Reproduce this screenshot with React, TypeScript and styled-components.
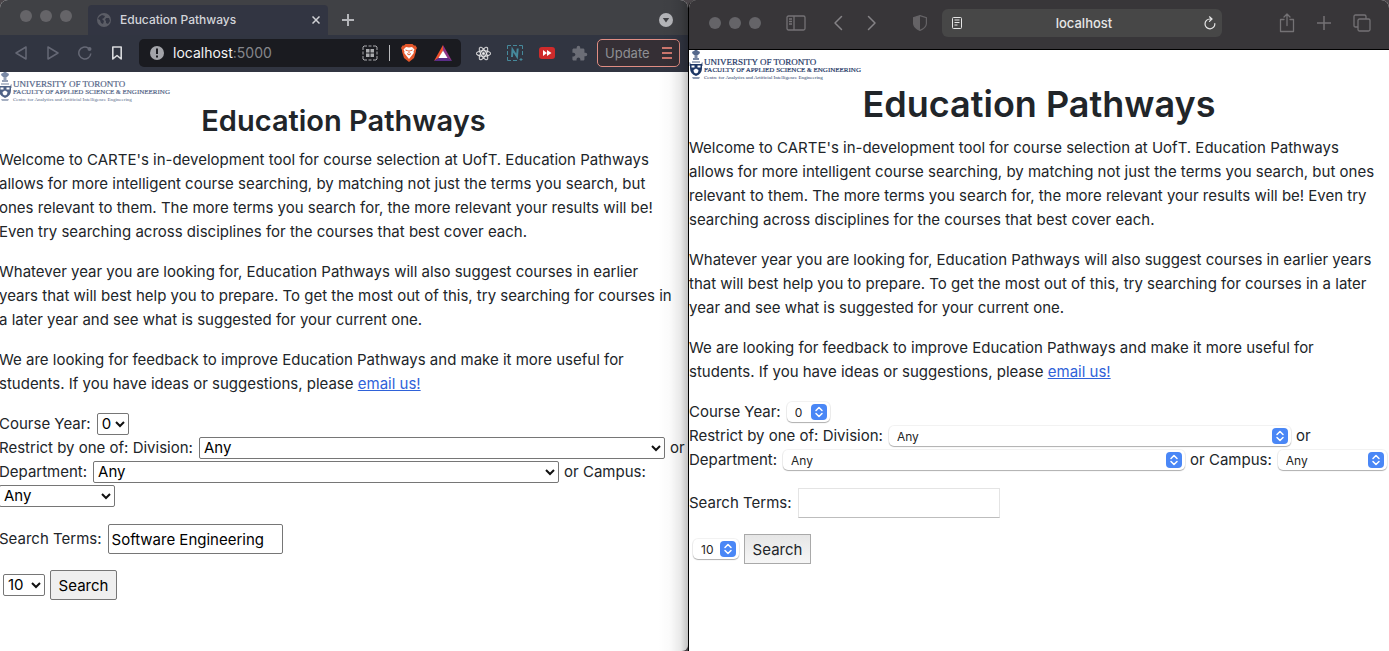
import React, { useId } from "react";
import styled, { createGlobalStyle, css } from "styled-components";
import { FaReact } from "react-icons/fa";
import { MdExtension } from "react-icons/md";

type Look = "brave" | "safari";

const GlobalStyle = createGlobalStyle`
  *, *::before, *::after { box-sizing: border-box; }
  body {
    margin: 0;
    background: #4a4549;
    color: #212529;
    font-family: Inter, Roboto, "Liberation Sans", sans-serif;
    font-size: 15px;
    line-height: 24px;
  }
  button, input, select { font-family: inherit; margin: 0; }
  svg { display: block; flex: none; }
`;

const Desktop = styled.div`
  display: grid;
  grid-template-columns: 688fr 701fr;
  min-height: 100vh;
`;

const Window = styled.section<{ $look: Look }>`
  display: flex;
  flex-direction: column;
  min-width: 0;
  overflow: hidden;
  background: #fff;
  ${({ $look }) =>
    $look === "brave"
      ? css`
          position: relative;
          border-radius: 8px 8px 6px 0;
          &::after {
            content: "";
            position: absolute;
            inset: 0 0 0 auto;
            width: 30px;
            pointer-events: none;
            background: linear-gradient(
              to right,
              rgba(0, 0, 0, 0),
              rgba(0, 0, 0, 0.02) 40%,
              rgba(0, 0, 0, 0.09) 76%,
              rgba(0, 0, 0, 0.24)
            );
          }
        `
      : css`
          border-left: 1px solid #000;
          border-radius: 8px 8px 0 0;
        `}
`;

/* Window chrome */

const TabStrip = styled.header`
  display: flex;
  align-items: flex-end;
  height: 35px;
  padding: 0 14px 0 20px;
  background: #404145;
`;

const Lights = styled.div<{ $lift?: boolean }>`
  display: flex;
  gap: 8px;
  align-self: flex-start;
  padding-top: ${({ $lift }) => ($lift ? "10px" : "17px")};
`;

const Light = styled.span`
  width: 12px;
  height: 12px;
  border-radius: 50%;
  background: #656468;
`;

const Tab = styled.div`
  display: flex;
  align-items: center;
  width: 240px;
  height: 30px;
  margin-left: 16px;
  padding: 0 4px 0 9px;
  border-radius: 4px 4px 0 0;
  background: #323542;
`;

const TabTitle = styled.span`
  flex: 1;
  margin-left: 9px;
  color: #d3d4d9;
  font-size: 12px;
  font-weight: 500;
`;

const IconButton = styled.button<{ $width?: number }>`
  display: flex;
  align-items: center;
  justify-content: center;
  flex: none;
  width: ${({ $width = 32 }) => $width}px;
  height: 28px;
  padding: 0;
  border: 0;
  background: none;
  color: inherit;
`;

const TabStripEnd = styled.div`
  display: flex;
  flex: 1;
  align-items: center;
  justify-content: space-between;
  height: 30px;
  padding-left: 12px;
  color: #b4b5b9;
`;

const Toolbar = styled.div`
  display: flex;
  align-items: center;
  height: 37px;
  padding: 0 8px 1px 5px;
  background: #313541;
  color: #656875;
`;

const AddressBar = styled.div`
  display: flex;
  flex: 1;
  align-items: center;
  height: 28px;
  margin: 0 6px;
  padding: 0 9px 0 11px;
  border-radius: 5px;
  background: #1a1b20;
`;

const AddressText = styled.span`
  flex: 1;
  margin-left: 9px;
  color: #85868b;
  font-size: 14px;

  b {
    color: #f4f4f5;
    font-weight: 400;
  }
`;

const AddressIcons = styled.div`
  display: flex;
  align-items: center;
  gap: 11px;
`;

const Divider = styled.span`
  width: 1px;
  height: 16px;
  background: #b9babd;
`;

const UpdateButton = styled.button`
  display: flex;
  align-items: center;
  justify-content: space-between;
  width: 83px;
  height: 28px;
  margin-left: 2px;
  padding: 0 7px;
  border: 1px solid #e08d83;
  border-radius: 5px;
  background: #352f35;
  color: #8f8f94;
  font-size: 13px;
`;

const SafariBar = styled.header`
  display: flex;
  align-items: center;
  height: 50px;
  padding-bottom: 3px;
  border-bottom: 1px solid #000;
  background: #383639;
  color: #747275;
`;

const SafariStart = styled.div`
  display: flex;
  width: 253px;
  padding-left: 20px;
`;

const SafariLights = styled(Lights)`
  align-self: center;
  padding: 0 15px 0 0;
`;

const SafariTool = styled(IconButton)`
  &:nth-child(3) { margin-left: 5px; }
  &:nth-child(5) { margin-left: 14px; }
`;

const SafariAddress = styled.div`
  display: flex;
  flex: 1;
  align-items: center;
  justify-content: space-between;
  height: 28px;
  padding: 0 6px 0 8px;
  border-radius: 6px;
  background: #474747;
  color: #e6e6e6;
  font-size: 13px;
  font-weight: 500;
`;

const SafariEnd = styled.div`
  display: flex;
  justify-content: flex-end;
  width: 167px;
  padding-right: 8px;
`;

/* Page content */

const Page = styled.main<{ $look: Look }>`
  margin-left: ${({ $look }) => ($look === "brave" ? "-1px" : "0")};
  white-space: nowrap;
`;

const Title = styled.h1<{ $look: Look }>`
  margin: 0 0 8px;
  font-weight: 600;
  text-align: center;
  ${({ $look }) =>
    $look === "brave"
      ? css`
          font-size: 29px;
          line-height: 38px;
        `
      : css`
          font-size: 36px;
          line-height: 48px;
        `}
`;

const Paragraph = styled.p`
  margin: 0 0 16px;
`;

const Link = styled.a`
  color: #2f62d9;
  text-decoration: underline;
`;

const Filters = styled.div`
  margin-bottom: 16px;
`;

const Line = styled.div`
  display: flex;
  align-items: center;
  gap: 5px;
  height: 24px;
`;

const FieldLine = styled(Line)`
  height: 30px;
  margin-bottom: 16px;
`;

const SubmitLine = styled(FieldLine)`
  padding-left: 4px;
`;

const Label = styled.label`
  margin-right: 1px;
`;

const Picker = styled.span<{ $look: Look; $width: number }>`
  display: inline-grid;
  align-items: center;
  width: ${({ $width }) => $width}px;

  > * { grid-area: 1 / 1; }
  > svg {
    justify-self: end;
    margin-right: ${({ $look }) => ($look === "brave" ? "4px" : "3px")};
    pointer-events: none;
  }
`;

const Select = styled.select<{ $look: Look }>`
  appearance: none;
  width: 100%;
  background: #fff;
  ${({ $look }) =>
    $look === "brave"
      ? css`
          height: 22px;
          padding: 0 4px;
          border: 1px solid #767676;
          border-radius: 2px;
          color: #000;
          font-size: 15px;
          line-height: 20px;
        `
      : css`
          height: 20px;
          padding: 1px 8px 0;
          border: 0;
          border-radius: 5px;
          box-shadow: 0 0 0 1px rgba(0, 0, 0, 0.05), 0 1px 1px rgba(0, 0, 0, 0.28);
          color: #252525;
          font-size: 12px;
          line-height: 19px;
        `}
`;

const TextInput = styled.input<{ $look: Look }>`
  height: 30px;
  padding: 0 3px;
  background: #fff;
  color: #000;
  font-size: 15px;
  ${({ $look }) =>
    $look === "brave"
      ? css`
          width: 175px;
          border: 1px solid #767676;
          border-radius: 2px;
        `
      : css`
          width: 202px;
          border: 1px solid #e4e4e4;
          border-bottom-color: #bdbdbd;
        `}
`;

const SearchButton = styled.button<{ $look: Look }>`
  width: 67px;
  height: 30px;
  padding: 0;
  font-size: 15px;
  ${({ $look }) =>
    $look === "brave"
      ? css`
          border: 1px solid #767676;
          border-radius: 2px;
          background: #efefef;
          color: #000;
        `
      : css`
          border: 1px solid #a9a9a9;
          background: linear-gradient(#e6e6e6, #f6f6f6);
          color: #212529;
        `}
`;

const CrestLogo = ({ faded }: { faded?: boolean }) => (
  <svg width="178" height="30" viewBox={faded ? "1 0 178 30" : "0 0 178 30"} role="img" opacity={faded ? 0.78 : 1}>
    <g fill="#1e3765">
      <path d="M3 3q0-2 2-2l1-1h2l1 1q2 0 2 2l-2 2H5Z" opacity=".75" />
      <path d="M5.500 5h3v4h-3zM4 8h6v2H4z" opacity=".6" />
      <path d="M3 11h8v2H3z" opacity=".4" />
      <path d="M1 14h12v4q0 6-6 8-6-2-6-8Z" />
      <path d="M3 27h8l-1 2H4Z" opacity=".5" />
      <path d="M0 12l2 1v3H0zM14 12l-2 1v3h2z" opacity=".4" />
    </g>
    <path d="M2.500 15.500h3v2h-3zM8.500 15.500h3v2h-3zM4.500 20l2.500-1.500L9.500 20 9 22.500l-2 1-2-1Z" fill="#fff" />
    <g fill="#1e3765" fontFamily="Liberation Serif, serif">
      <text x="15" y="15" fontSize="9" stroke="#1e3765" strokeWidth=".2">UNIVERSITY OF TORONTO</text>
      <text x="15" y="22" fontSize="7" stroke="#1e3765" strokeWidth=".2">
        FACULTY <tspan fontSize="6">OF</tspan> APPLIED SCIENCE <tspan fontSize="6">&amp;</tspan> ENGINEERING
      </text>
      <text x="15" y="29" fontSize="5">Centre for Analytics and Artificial Intelligence Engineering</text>
    </g>
  </svg>
);

const Chevron = () => (
  <svg width="10" height="8" viewBox="0 0 10 8" fill="none" stroke="#111" strokeWidth="2">
    <path d="M1 2l4 4 4-4" />
  </svg>
);

const Stepper = () => (
  <svg width="16" height="16" viewBox="0 0 16 16" fill="none">
    <rect width="16" height="16" rx="4" fill="#4a87f6" />
    <path d="M5 6.500l3-3 3 3M5 9.500l3 3 3-3" stroke="#fff" strokeWidth="1.500" strokeLinecap="round" strokeLinejoin="round" />
  </svg>
);

interface DropDownProps {
  id: string;
  look: Look;
  width: number;
  value: string;
  label?: string;
}

const DropDown = ({ id, look, width, value, label }: DropDownProps) => (
  <Picker $look={look} $width={width}>
    <Select id={id} $look={look} defaultValue={value} aria-label={label}>
      <option value={value}>{value}</option>
    </Select>
    {look === "brave" ? <Chevron /> : <Stepper />}
  </Picker>
);

interface SearchPageProps {
  look: Look;
  copy: string[][];
  terms: string;
}

const Lines = ({ lines }: { lines: string[] }) => (
  <>
    {lines.map((line, i) => (
      <React.Fragment key={line}>
        {i > 0 && <br />}
        {line}
      </React.Fragment>
    ))}
  </>
);

const SearchPage = ({ look, copy, terms }: SearchPageProps) => {
  const id = useId();
  const brave = look === "brave";
  const wide = brave ? 466 : 402;
  const campus = <DropDown id={id + "campus"} look={look} width={brave ? 116 : 109} value="Any" />;
  return (
    <Page $look={look}>
      <CrestLogo faded={brave} />
      <Title $look={look}>Education Pathways</Title>
      {copy.map((lines, i) => (
        <Paragraph key={i}>
          <Lines lines={lines} />
          {i === copy.length - 1 && (
            <>
              {" "}
              <Link href="#email">email us!</Link>
            </>
          )}
        </Paragraph>
      ))}
      <form onSubmit={(e) => e.preventDefault()}>
        <Filters>
          <Line>
            <Label htmlFor={id + "year"}>Course Year:</Label>
            <DropDown id={id + "year"} look={look} width={brave ? 32 : 43} value="0" />
          </Line>
          <Line>
            <Label htmlFor={id + "division"}>Restrict by one of: Division:</Label>
            <DropDown id={id + "division"} look={look} width={wide} value="Any" />
            <span>or</span>
          </Line>
          <Line>
            <Label htmlFor={id + "department"}>Department:</Label>
            <DropDown id={id + "department"} look={look} width={wide} value="Any" />
            <Label htmlFor={id + "campus"}>or Campus:</Label>
            {!brave && campus}
          </Line>
          {brave && <Line>{campus}</Line>}
        </Filters>
        <FieldLine>
          <Label htmlFor={id + "terms"}>Search Terms:</Label>
          <TextInput id={id + "terms"} $look={look} type="text" defaultValue={terms} />
        </FieldLine>
        <SubmitLine>
          <DropDown id={id + "count"} look={look} width={brave ? 42 : 46} value="10" label="Number of results" />
          <SearchButton $look={look} type="submit">Search</SearchButton>
        </SubmitLine>
      </form>
    </Page>
  );
};

const BraveChrome = () => (
  <>
    <TabStrip>
      <Lights $lift>
        <Light />
        <Light />
        <Light />
      </Lights>
      <Tab>
        <svg width="14" height="14" viewBox="0 0 14 14">
          <circle cx="7" cy="7" r="7" fill="#5b5d66" />
          <path d="M2 4l3-2 3 1-1 2-2 1 2 2-1 3-2-1-1-3-2-1ZM9 5l3 0 1 3-2 3-2-1 0-2-1-1Z" fill="#323542" />
        </svg>
        <TabTitle>Education Pathways</TabTitle>
        <IconButton $width={16} aria-label="Close tab">
          <svg width="8" height="8" viewBox="0 0 8 8" stroke="#d0d1d5" strokeWidth="1.500">
            <path d="M.5.500l7 7M7.500.500l-7 7" />
          </svg>
        </IconButton>
      </Tab>
      <TabStripEnd>
        <IconButton $width={16} aria-label="New tab">
          <svg width="12" height="12" viewBox="0 0 12 12" stroke="currentColor" strokeWidth="2">
            <path d="M6 0v12M0 6h12" />
          </svg>
        </IconButton>
        <IconButton $width={16} aria-label="Tab search">
          <svg width="14" height="14" viewBox="0 0 14 14">
            <circle cx="7" cy="7" r="7" fill="currentColor" />
            <path d="M3.800 5h6.400L7 9.500Z" fill="#404145" />
          </svg>
        </IconButton>
      </TabStripEnd>
    </TabStrip>
    <Toolbar>
      <IconButton aria-label="Back">
        <svg width="14" height="14" viewBox="0 0 14 14" fill="none" stroke="currentColor" strokeWidth="1.500" strokeLinejoin="round">
          <path d="M12 1v12L2 7Z" />
        </svg>
      </IconButton>
      <IconButton aria-label="Forward">
        <svg width="14" height="14" viewBox="0 0 14 14" fill="none" stroke="currentColor" strokeWidth="1.500" strokeLinejoin="round">
          <path d="M2 1v12l10-6Z" />
        </svg>
      </IconButton>
      <IconButton aria-label="Reload">
        <svg width="14" height="14" viewBox="0 0 14 14" fill="none" stroke="currentColor" strokeWidth="1.500">
          <path d="M12.800 7.500a6 6 0 1 1-2.500-5.400" />
          <circle cx="11.500" cy="3" r="2" fill="currentColor" stroke="none" />
        </svg>
      </IconButton>
      <IconButton aria-label="Bookmark">
        <svg width="12" height="14" viewBox="0 0 12 14" fill="none" stroke="#d8d9dc" strokeWidth="1.600" strokeLinejoin="round">
          <path d="M1.800 1h8.400v12L6 9.500 1.800 13Z" />
        </svg>
      </IconButton>
      <AddressBar>
        <svg width="14" height="14" viewBox="0 0 14 14">
          <circle cx="7" cy="7" r="7" fill="#a3a4a9" />
          <path d="M6 2.500h2V8H6zM6 9.500h2v2H6z" fill="#1a1b20" />
        </svg>
        <AddressText>
          <b>localhost</b>:5000
        </AddressText>
        <AddressIcons>
          <svg width="16" height="16" viewBox="0 0 16 16" fill="none" stroke="#aaabae">
            <path d="M1 5V2l1-1h3M11 1h3l1 1v3M15 11v3l-1 1h-3M5 15H2l-1-1v-3M6.500 1h3M6.500 15h3M1 6.500v3M15 6.500v3" />
            <path d="M4 4h3.500v3.500H4zM8.500 4H12v3.500H8.500zM4 8.500h3.500V12H4zM8.500 8.500H12V12H8.500z" fill="#aaabae" stroke="none" />
          </svg>
          <Divider />
          <svg width="16" height="18" viewBox="0 0 16 18">
            <path d="M4.500 0h7l1.500 1.500 1.500 0L16 4l-1 2 0 1.500-2 6.500L8 18l-5-4L1 7.500 1 6 0 4l1.500-2.500H3Z" fill="#e4572b" />
            <path d="M5 3l3 .6L11 3l2.500 2.500-1 2 .3 1.500-2.600 3.300L8 15l-2.200-2.700L3.200 9l.3-1.500-1-2Z" fill="#fff" />
            <path d="M4.500 6l2.300.8M11.500 6l-2.300.8M8 6v3.500M6 9.500l2 1.500 2-1.500" fill="none" stroke="#e4572b" />
          </svg>
          <svg width="24" height="16" viewBox="-6 0 24 16">
            <path d="M9 0v6l3.500 6.500L18 16Z" fill="#8d3487" />
            <path d="M9 0L0 16l5-3 4-7.500Z" fill="#f0512c" />
            <path d="M0 16h18l-5-3.500H5Z" fill="#5a2d88" />
            <path d="M9 5.500l4.500 7.500h-9Z" fill="#fff" />
          </svg>
        </AddressIcons>
      </AddressBar>
      <IconButton aria-label="React Developer Tools">
        <FaReact size={15} color="#eeeeef" stroke="#eeeeef" strokeWidth={12} />
      </IconButton>
      <IconButton aria-label="Nimbus capture">
        <svg width="16" height="16" viewBox="0 0 16 16" fill="none" stroke="#46899b">
          <path d="M.5 4V.500H4M6 .5h4M12 .5h3.500V4M15.500 6v4M12.500 14.500h3M14 13v3M.5 6v4M.5 12v3.500H4M6 15.500h4" />
          <path d="M5 12l.5-7.500 4.500 7 .7-8" strokeWidth="2" />
        </svg>
      </IconButton>
      <IconButton aria-label="Video speed">
        <svg width="16" height="12" viewBox="0 0 16 12">
          <rect width="16" height="12" rx="3" fill="#cf2b2b" />
          <path d="M4 3l4 3-4 3ZM8 3l4.500 3L8 9Z" fill="#fff" />
        </svg>
      </IconButton>
      <IconButton aria-label="Extensions">
        <MdExtension size={17} color="#6b6d76" />
      </IconButton>
      <UpdateButton>
        Update
        <svg width="10" height="12" viewBox="0 0 10 12" stroke="#cd766d" strokeWidth="2">
          <path d="M0 1h10M0 6h10M0 11h10" />
        </svg>
      </UpdateButton>
    </Toolbar>
  </>
);

const SafariChrome = () => (
  <SafariBar>
    <SafariStart>
      <SafariLights>
        <Light />
        <Light />
        <Light />
      </SafariLights>
      <SafariTool $width={40} aria-label="Sidebar">
        <svg width="20" height="16" viewBox="0 0 20 16" fill="none" stroke="currentColor" strokeWidth="1.300">
          <rect x="1" y="1" width="18" height="14" rx="1.500" />
          <path d="M8 1v14M3 4h3M3 6.500h3M3 9h3" />
        </svg>
      </SafariTool>
      <SafariTool $width={34} aria-label="Back">
        <svg width="10" height="16" viewBox="0 0 10 16" fill="none" stroke="#858386" strokeWidth="1.500" strokeLinecap="round" strokeLinejoin="round">
          <path d="M8.500 1.500L2 8l6.500 6.500" />
        </svg>
      </SafariTool>
      <SafariTool $width={34} aria-label="Forward">
        <svg width="10" height="16" viewBox="0 0 10 16" fill="none" stroke="#858386" strokeWidth="1.500" strokeLinecap="round" strokeLinejoin="round">
          <path d="M1.500 1.500L8 8l-6.500 6.500" />
        </svg>
      </SafariTool>
      <SafariTool $width={34} aria-label="Privacy report">
        <svg width="14" height="16" viewBox="0 0 14 16">
          <path d="M7 .6l6.400 2.200v6Q13 13 7 15.400 1 13 .6 8.800v-6Z" fill="none" stroke="#656366" strokeWidth="1.200" />
          <path d="M7 .6v14.800Q1 13 .6 8.800v-6Z" fill="#656366" />
        </svg>
      </SafariTool>
    </SafariStart>
    <SafariAddress>
      <svg width="14" height="12" viewBox="0 0 14 12" fill="none" stroke="currentColor">
        <rect x="2.500" y=".5" width="9" height="11" rx="1" />
        <path d="M4.500 3h5M4.500 5.500h5M4.500 8h3" />
      </svg>
      <span>localhost</span>
      <svg width="12" height="14" viewBox="0 0 12 14" fill="none" stroke="currentColor" strokeWidth="1.200" strokeLinecap="round">
        <path d="M10.800 7.500A4.900 4.900 0 1 1 6 3h1.500M5.500.800L8 3 5.500 5.400" />
      </svg>
    </SafariAddress>
    <SafariEnd>
      <IconButton $width={36} aria-label="Share">
        <svg width="16" height="20" viewBox="0 0 16 20" fill="none" stroke="currentColor" strokeWidth="1.300" strokeLinecap="round" strokeLinejoin="round">
          <path d="M5 6.500H1.500v12h13v-12H11M8 12.500V1M5 4l3-3 3 3" />
        </svg>
      </IconButton>
      <IconButton $width={38} aria-label="New tab">
        <svg width="14" height="14" viewBox="0 0 14 14" stroke="currentColor" strokeWidth="1.500">
          <path d="M7 0v14M0 7h14" />
        </svg>
      </IconButton>
      <IconButton $width={38} aria-label="Tab overview">
        <svg width="18" height="18" viewBox="0 0 18 18" fill="none" stroke="currentColor" strokeWidth="1.300">
          <rect x="5" y="5" width="12" height="12" rx="1.500" />
          <path d="M5 13H2.500Q1 13 1 11.500v-9Q1 1 2.500 1h9Q13 1 13 2.500V5" />
        </svg>
      </IconButton>
    </SafariEnd>
  </SafariBar>
);

const braveCopy = [
  [
    "Welcome to CARTE's in-development tool for course selection at UofT. Education Pathways",
    "allows for more intelligent course searching, by matching not just the terms you search, but",
    "ones relevant to them. The more terms you search for, the more relevant your results will be!",
    "Even try searching across disciplines for the courses that best cover each.",
  ],
  [
    "Whatever year you are looking for, Education Pathways will also suggest courses in earlier",
    "years that will best help you to prepare. To get the most out of this, try searching for courses in",
    "a later year and see what is suggested for your current one.",
  ],
  [
    "We are looking for feedback to improve Education Pathways and make it more useful for",
    "students. If you have ideas or suggestions, please",
  ],
];

const safariCopy = [
  [
    "Welcome to CARTE's in-development tool for course selection at UofT. Education Pathways",
    "allows for more intelligent course searching, by matching not just the terms you search, but ones",
    "relevant to them. The more terms you search for, the more relevant your results will be! Even try",
    "searching across disciplines for the courses that best cover each.",
  ],
  [
    "Whatever year you are looking for, Education Pathways will also suggest courses in earlier years",
    "that will best help you to prepare. To get the most out of this, try searching for courses in a later",
    "year and see what is suggested for your current one.",
  ],
  braveCopy[2],
];

export default function App() {
  return (
    <>
      <GlobalStyle />
      <Desktop>
        <Window $look="brave">
          <BraveChrome />
          <SearchPage look="brave" copy={braveCopy} terms="Software Engineering" />
        </Window>
        <Window $look="safari">
          <SafariChrome />
          <SearchPage look="safari" copy={safariCopy} terms="" />
        </Window>
      </Desktop>
    </>
  );
}
